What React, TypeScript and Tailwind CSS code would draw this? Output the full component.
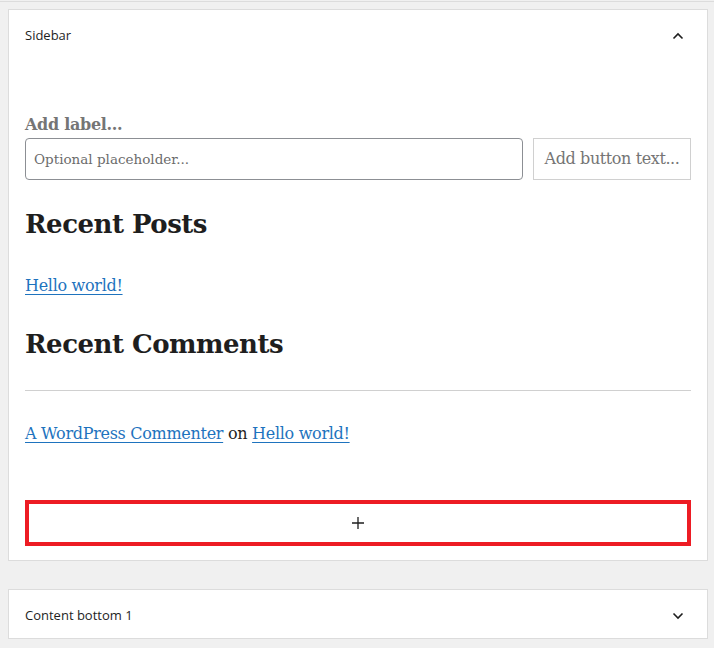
import React from 'react';

const serif = { fontFamily: '"DejaVu Serif", "Liberation Serif", serif' };

function Chevron({ up }: { up?: boolean }) {
  return (
    <svg width="12" height="8" viewBox="0 0 12 8" className="text-[#1e1e1e]">
      <path
        d={up ? 'M1.5 6.5 L6 2 L10.5 6.5' : 'M1.5 1.5 L6 6 L10.5 1.5'}
        fill="none"
        stroke="currentColor"
        strokeWidth="1.6"
      />
    </svg>
  );
}

export default function App() {
  return (
    <main className="min-h-[648px] w-[714px] bg-[#f0f0f0] overflow-hidden font-['Open_Sans','Noto_Sans',sans-serif]">
      {/* top edge of the previous area */}
      <div className="h-[1px]" />
      <div className="h-[1px] bg-[#dcdcdc]" />
      <div className="h-[7px]" />

      {/* Sidebar panel */}
      <section className="ml-2 w-[700px] border border-[#dcdcdc] bg-white">
        <div className="flex h-[50px] items-center justify-between pl-4 pr-[23px] pt-[2px]">
          <span className="text-[13px] text-[#1e1e1e]">Sidebar</span>
          <Chevron up />
        </div>

        <div className="px-4 pt-[54px] pb-[14px]" style={serif}>
          <div className="text-[16px] leading-[22px] font-bold text-[#757575] tracking-[-0.3px]">Add label...</div>
          <div className="mt-[2px] flex gap-[10px]">
            <div className="flex h-[42px] flex-1 items-center rounded-[4px] border border-[#8c8f94] px-[8px] text-[13.5px] text-[#6b6b6b]">
              Optional placeholder...
            </div>
            <div className="flex h-[42px] w-[158px] items-center justify-center border border-[#d0d0d0] text-[16px] text-[#757575] tracking-[-0.4px]">
              Add button text...
            </div>
          </div>

          <h2 className="mt-[26px] text-[26px] leading-[36px] font-bold text-[#1e1e1e] tracking-[-0.5px]">Recent Posts</h2>
          <div className="mt-[32px] text-[16px] leading-[24px] tracking-[-0.3px]">
            <a className="text-[#1e73be] underline underline-offset-[3px]">Hello world!</a>
          </div>

          <h2 className="mt-[28px] text-[26px] leading-[36px] font-bold text-[#1e1e1e] tracking-[-0.5px]">Recent Comments</h2>
          <hr className="mt-[28px] border-t border-[#d0d0d0]" />
          <div className="mt-[31px] text-[16px] leading-[24px] text-[#1e1e1e] tracking-[-0.3px]">
            <a className="text-[#1e73be] underline underline-offset-[3px]">A WordPress Commenter</a> on{' '}
            <a className="text-[#1e73be] underline underline-offset-[3px]">Hello world!</a>
          </div>

          <div className="mt-[54px] flex h-[46px] items-center justify-center border-[4px] border-[#ed1c24]">
            <svg width="12" height="12" viewBox="0 0 12 12">
              <path d="M6 0 V12 M0 6 H12" stroke="#1e1e1e" strokeWidth="1.3" />
            </svg>
          </div>
        </div>
      </section>

      <div className="h-[28px]" />

      {/* Content bottom 1 */}
      <section className="ml-2 w-[700px] border border-[#dcdcdc] bg-white">
        <div className="flex h-[48px] items-center justify-between pl-4 pr-[23px] pt-[3px]">
          <span className="text-[13px] text-[#1e1e1e]">Content bottom 1</span>
          <Chevron />
        </div>
      </section>
    </main>
  );
}
